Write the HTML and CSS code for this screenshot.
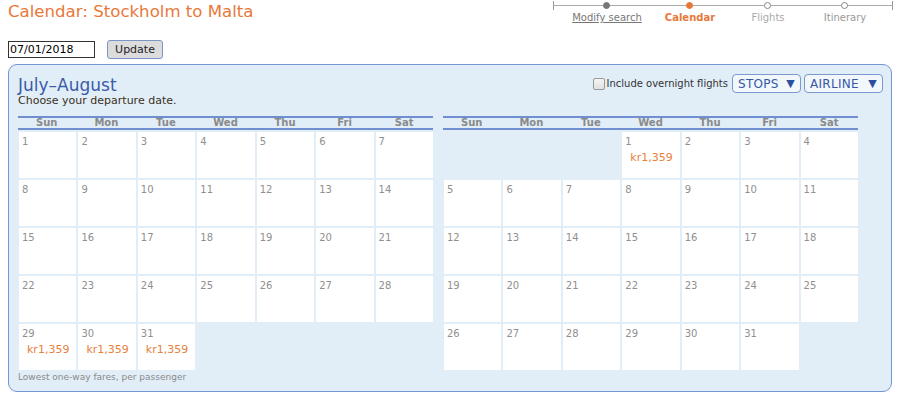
FILE: index.html
```html
<!DOCTYPE html>
<html lang="en">

<head>
    <meta charset="UTF-8">
    <meta name="viewport" content="width=device-width, initial-scale=1.0">
    <title>Calendar: Stockholm to Malta</title>
    <link rel="stylesheet" href="styles.css">
</head>

<body>
    <header class="top">
        <h1>Calendar: Stockholm to Malta</h1>
        <nav class="steps">
            <span class="steps-pad"></span>
            <a class="step done" href="#">Modify search</a>
            <span class="step current">Calendar</span>
            <span class="step todo">Flights</span>
            <span class="step todo last">Itinerary</span>
        </nav>
    </header>

    <form class="date-row">
        <input class="date-field" type="text" value="07/01/2018">
        <button class="update-btn" type="button">Update</button>
    </form>

    <section class="panel">
        <div class="panel-head">
            <div>
                <h2>July&ndash;August</h2>
                <p class="hint">Choose your departure date.</p>
            </div>
            <div class="filters">
                <label class="overnight"><span class="box"></span>Include overnight flights</label>
                <button class="drop stops" type="button">STOPS <span class="tri">&#9660;</span></button>
                <button class="drop airline" type="button">AIRLINE <span class="tri">&#9660;</span></button>
            </div>
        </div>

        <div class="months">
            <div class="month">
                <div class="dow">
                    <span>Sun</span><span>Mon</span><span>Tue</span><span>Wed</span><span>Thu</span><span>Fri</span><span>Sat</span>
                </div>
                <div class="days">
                    <div class="day"><b>1</b></div><div class="day"><b>2</b></div><div class="day"><b>3</b></div><div class="day"><b>4</b></div><div class="day"><b>5</b></div><div class="day"><b>6</b></div><div class="day"><b>7</b></div>
                    <div class="day"><b>8</b></div><div class="day"><b>9</b></div><div class="day"><b>10</b></div><div class="day"><b>11</b></div><div class="day"><b>12</b></div><div class="day"><b>13</b></div><div class="day"><b>14</b></div>
                    <div class="day"><b>15</b></div><div class="day"><b>16</b></div><div class="day"><b>17</b></div><div class="day"><b>18</b></div><div class="day"><b>19</b></div><div class="day"><b>20</b></div><div class="day"><b>21</b></div>
                    <div class="day"><b>22</b></div><div class="day"><b>23</b></div><div class="day"><b>24</b></div><div class="day"><b>25</b></div><div class="day"><b>26</b></div><div class="day"><b>27</b></div><div class="day"><b>28</b></div>
                    <div class="day"><b>29</b><span class="fare">kr1,359</span></div><div class="day"><b>30</b><span class="fare">kr1,359</span></div><div class="day"><b>31</b><span class="fare">kr1,359</span></div>
                </div>
                <p class="note">Lowest one-way fares, per passenger</p>
            </div>

            <div class="month">
                <div class="dow">
                    <span>Sun</span><span>Mon</span><span>Tue</span><span>Wed</span><span>Thu</span><span>Fri</span><span>Sat</span>
                </div>
                <div class="days">
                    <div class="blank"></div><div class="blank"></div><div class="blank"></div>
                    <div class="day"><b>1</b><span class="fare">kr1,359</span></div><div class="day"><b>2</b></div><div class="day"><b>3</b></div><div class="day"><b>4</b></div>
                    <div class="day"><b>5</b></div><div class="day"><b>6</b></div><div class="day"><b>7</b></div><div class="day"><b>8</b></div><div class="day"><b>9</b></div><div class="day"><b>10</b></div><div class="day"><b>11</b></div>
                    <div class="day"><b>12</b></div><div class="day"><b>13</b></div><div class="day"><b>14</b></div><div class="day"><b>15</b></div><div class="day"><b>16</b></div><div class="day"><b>17</b></div><div class="day"><b>18</b></div>
                    <div class="day"><b>19</b></div><div class="day"><b>20</b></div><div class="day"><b>21</b></div><div class="day"><b>22</b></div><div class="day"><b>23</b></div><div class="day"><b>24</b></div><div class="day"><b>25</b></div>
                    <div class="day"><b>26</b></div><div class="day"><b>27</b></div><div class="day"><b>28</b></div><div class="day"><b>29</b></div><div class="day"><b>30</b></div><div class="day"><b>31</b></div>
                </div>
            </div>
        </div>
    </section>
</body>

</html>
```

FILE: styles.css
```css
html,
body {
    margin: 0;
    padding: 0;
    font-family: Verdana, Tahoma, 'DejaVu Sans', sans-serif;
    background: #fff;
}

body {
    padding: 0 8px;
}

.top {
    display: flex;
    justify-content: space-between;
    align-items: flex-start;
    height: 34px;
}

h1 {
    margin: 0;
    padding-top: 1px;
    font-size: 16.6px;
    font-weight: normal;
    line-height: 22px;
    color: #e8783a;
}

/* progress steps */
.steps {
    position: relative;
    display: grid;
    grid-template-columns: 14px 80px 86px 70px 84px;
    width: 340px;
    margin-right: -1px;
    padding-top: 12px;
    font-size: 10px;
}

.steps::before {
    content: "";
    position: absolute;
    left: 0;
    right: 0;
    top: 5px;
    height: 1px;
    background: #aaa;
}

.steps::after {
    content: "";
    position: absolute;
    left: 0;
    right: 0;
    top: 1px;
    height: 9px;
    border-left: 1px solid #999;
    border-right: 1px solid #999;
}

.step {
    position: relative;
    text-align: center;
    color: #aaa;
}

.step::before {
    content: "";
    position: absolute;
    left: 50%;
    top: -10px;
    width: 7px;
    height: 7px;
    margin-left: -4px;
    border-radius: 50%;
    box-sizing: border-box;
    background: #fff;
    border: 1px solid #888;
}

.step.done {
    color: #777;
    text-decoration: underline;
}

.step.done::before {
    background: #777;
    border-color: #777;
}

.step.current {
    color: #e8783a;
    font-weight: bold;
}

.step.current::before {
    background: #e8783a;
    border-color: #e8783a;
}

.step.last {
    color: #999;
}

/* date row */
.date-row {
    display: flex;
    align-items: center;
    gap: 12px;
    height: 30px;
    margin: 0;
}

.date-field {
    width: 87px;
    height: 17px;
    box-sizing: border-box;
    padding: 0 1px;
    border: 1px solid #333;
    font-family: inherit;
    font-size: 11px;
    color: #000;
}

.update-btn {
    width: 56px;
    height: 19px;
    padding: 0;
    border: 1px solid #7b96c6;
    border-radius: 3px;
    background: #dcdcdc;
    font-family: inherit;
    font-size: 11px;
    color: #222;
}

/* panel */
.panel {
    box-sizing: border-box;
    height: 328px;
    border: 1px solid #7396d4;
    border-radius: 9px;
    background: #e1eef8;
    padding: 9px 9px 0 9px;
}

.panel-head {
    display: flex;
    justify-content: space-between;
    align-items: flex-start;
    height: 42px;
}

h2 {
    margin: 0;
    padding-top: 1px;
    font-size: 17px;
    font-weight: normal;
    line-height: 20px;
    color: #3b5ca8;
}

.hint {
    margin: 0;
    font-size: 11px;
    line-height: 12px;
    color: #3a3020;
}

.filters {
    display: flex;
    align-items: center;
    gap: 3px;
    margin-right: -1px;
}

.overnight {
    display: flex;
    align-items: center;
    gap: 2px;
    font-size: 10px;
    color: #333;
    margin-right: 1px;
}

.box {
    width: 12px;
    height: 12px;
    box-sizing: border-box;
    border: 1px solid #999;
    border-radius: 2px;
    background: linear-gradient(#f4f4f4, #e0e0e0);
}

.drop {
    display: flex;
    align-items: center;
    justify-content: space-between;
    height: 19px;
    padding: 0 5px 0 5px;
    border: 1px solid #7b98cf;
    border-radius: 4px;
    background: #f2f7fc;
    font-family: inherit;
    font-size: 12px;
    color: #3558a5;
    letter-spacing: 0.3px;
}

.drop.stops {
    width: 69px;
}

.drop.airline {
    width: 79px;
}

.tri {
    font-size: 11px;
    color: #2c4f9c;
}

/* months */
.months {
    display: flex;
    gap: 10px;
}

.month {
    width: 415px;
}

.dow {
    display: grid;
    grid-template-columns: repeat(7, 1fr);
    gap: 2px;
    border-top: 2px solid #6f8fd0;
    border-bottom: 2px solid #6f8fd0;
    font-size: 10px;
    font-weight: bold;
    line-height: 10px;
    color: #8a8a8a;
    text-align: center;
}

.days {
    display: grid;
    grid-template-columns: repeat(7, 1fr);
    grid-auto-rows: 46px;
    gap: 2px;
    padding: 2px 0 0 1px;
}

.day {
    display: flex;
    flex-direction: column;
    align-items: flex-start;
    background: #fff;
    padding: 4px 3px;
}

.day b {
    font-weight: normal;
    font-size: 10px;
    line-height: 12px;
    color: #8f8f8f;
}

.fare {
    margin: 3px 0 0 5px;
    font-size: 11px;
    color: #e8803c;
}

.note {
    margin: 2px 0 0;
    font-size: 9px;
    color: #8a8a8a;
}
```
